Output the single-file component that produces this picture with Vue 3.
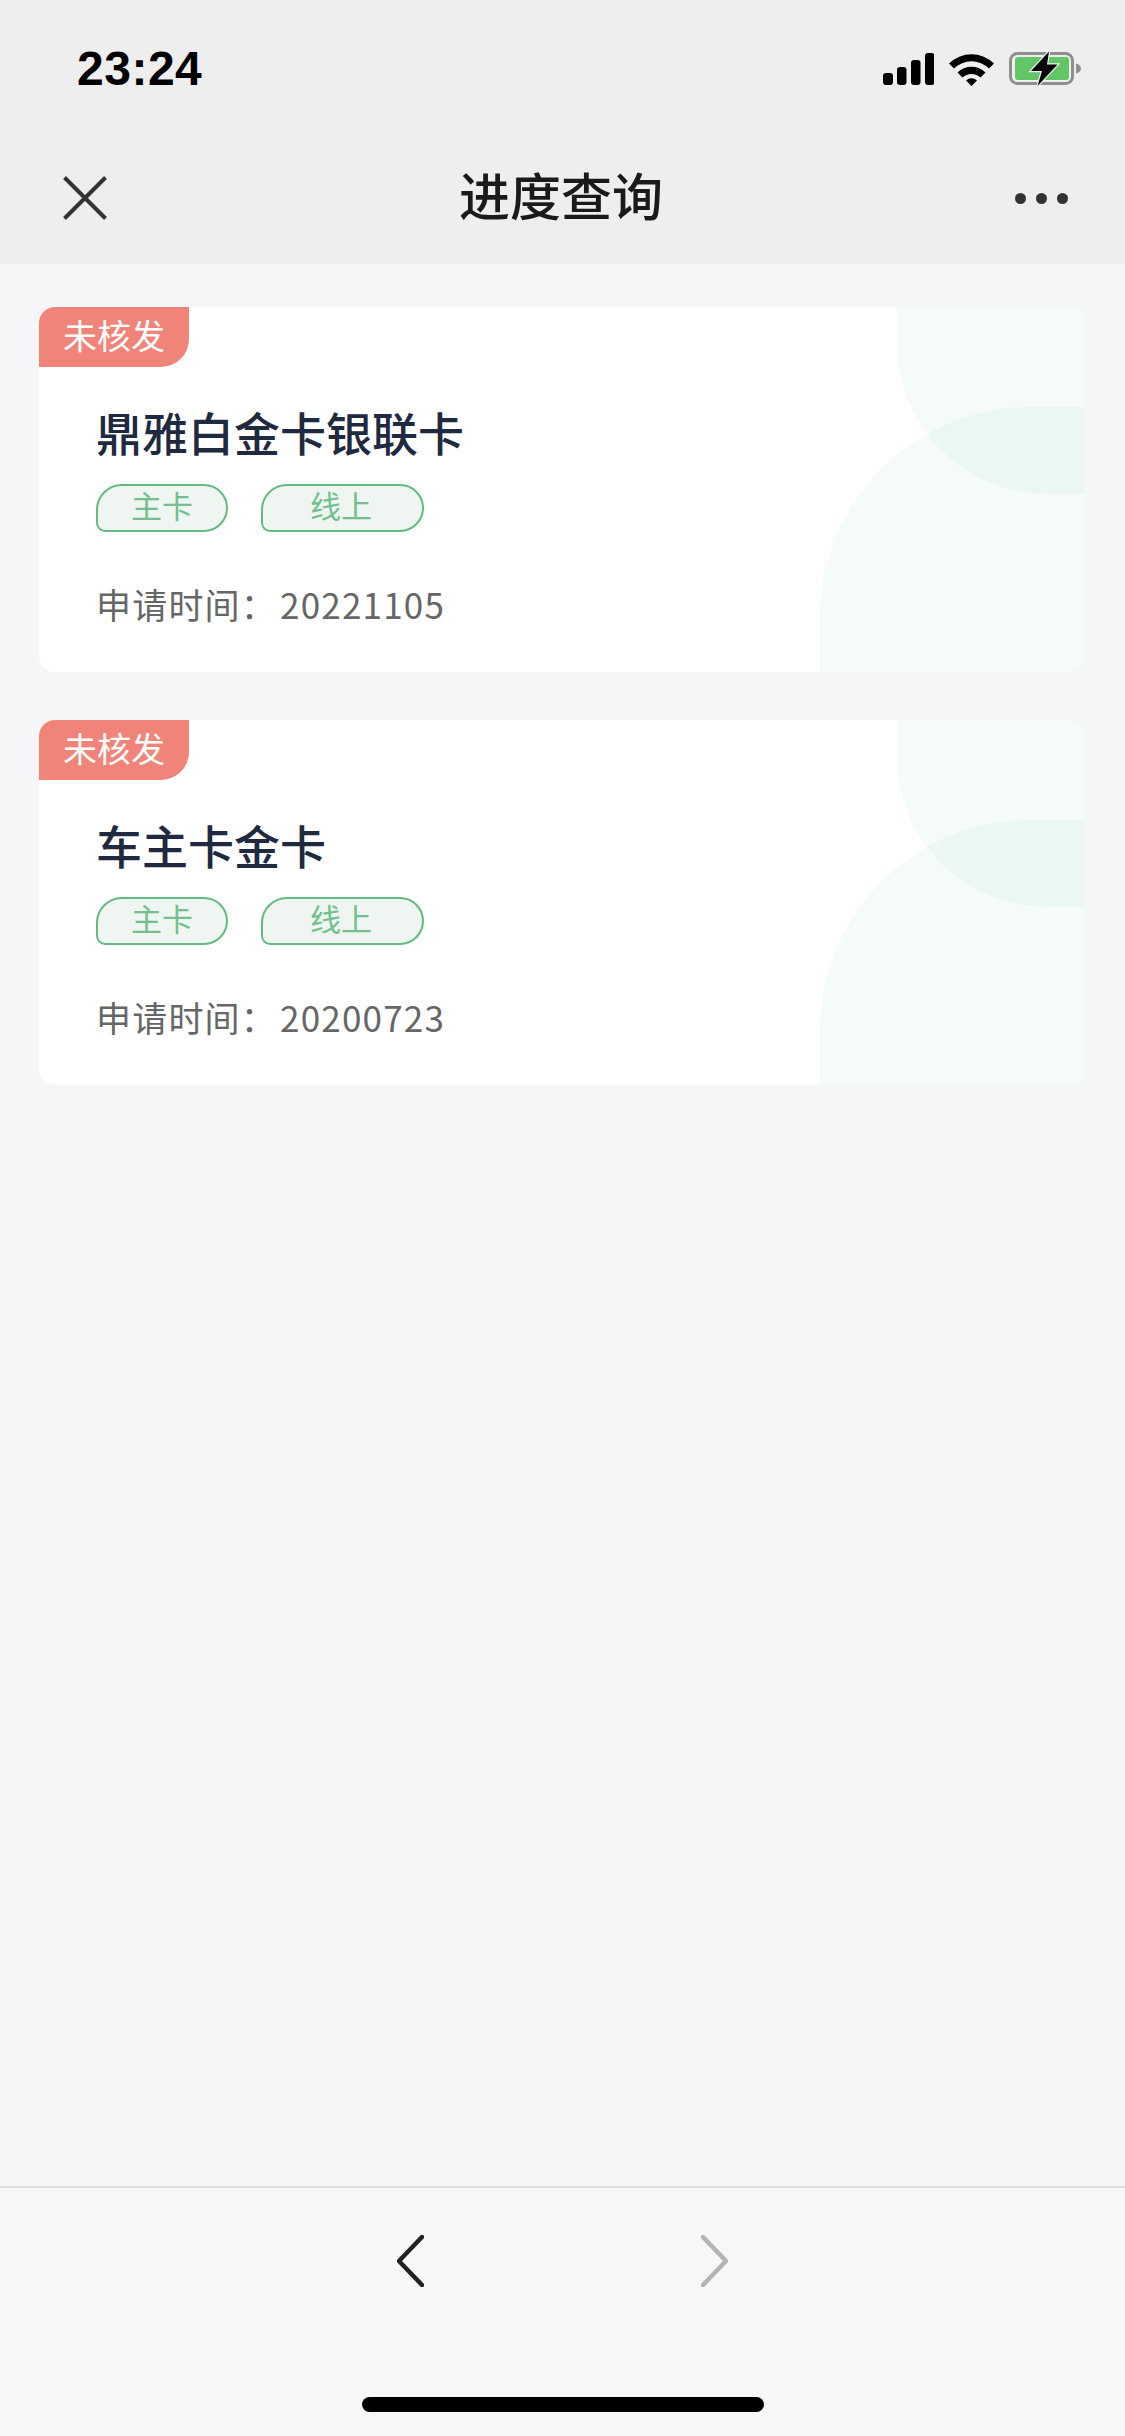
<script setup>
const cards = [
  { id: 1, name: '鼎雅白金卡银联卡', date: '20221105' },
  { id: 2, name: '车主卡金卡', date: '20200723' }
]
</script>

<template>
  <div class="page">
    <header class="head">
      <div class="status">
        <span class="time">23:24</span>
        <div class="status-icons">
          <svg class="signal" width="51" height="32" viewBox="0 0 51 32">
            <rect x="0" y="20" width="10" height="12" rx="3" />
            <rect x="14" y="14" width="9.500" height="18" rx="3" />
            <rect x="28" y="7" width="9.500" height="25" rx="3" />
            <rect x="42" y="0" width="9.500" height="32" rx="3" />
          </svg>
          <svg class="wifi" width="45" height="33" viewBox="0 0 45 33">
            <path d="M0 10.500A32 32 0 0 1 45 10.500L40 15.500A25 25 0 0 0 5 15.500Z" />
            <path d="M8.500 19.500A20 20 0 0 1 36.500 19.500L31.500 24.500A13 13 0 0 0 13.500 24.500Z" />
            <path d="M17 27.500A8 8 0 0 1 28 27.500L22.500 33Z" />
          </svg>
          <svg class="battery" width="74" height="36" viewBox="0 0 74 36">
            <rect x="1.500" y="2.500" width="62" height="30" rx="7" fill="none" stroke="#8e8e8e" stroke-width="3" />
            <rect x="6" y="6" width="54" height="23" rx="3" fill="#62c667" />
            <path d="M67 12.500C70 13 72 15 72 17.500C72 20 70 22 67 22.500Z" fill="#8e8e8e" />
            <path d="M40 0.500L22 20H33L28.500 35L48.500 13.500H38Z" fill="#000" stroke="#eee" stroke-width="2.500" paint-order="stroke" />
          </svg>
        </div>
      </div>
      <div class="nav">
        <svg class="close" width="44" height="44" viewBox="0 0 44 44">
          <path d="M1.500 1.500L42.500 42.500M42.500 1.500L1.500 42.500" />
        </svg>
        <h1 class="title">进度查询</h1>
        <div class="more"><i></i><i></i><i></i></div>
      </div>
    </header>

    <main class="list">
      <section v-for="card in cards" :key="card.id" class="card">
        <div class="shape shape-top"></div>
        <div class="shape shape-bottom"></div>
        <div class="badge">未核发</div>
        <div class="body">
          <div class="name">{{ card.name }}</div>
          <div class="tags">
            <span class="tag">主卡</span>
            <span class="tag tag-wide">线上</span>
          </div>
          <div class="date">申请时间：<span class="date-value">{{ card.date }}</span></div>
        </div>
      </section>
    </main>

    <footer class="foot">
      <div class="arrows">
        <svg width="27" height="52" viewBox="0 0 27 52">
          <path d="M25 2L2 26L25 50" stroke="#222" />
        </svg>
        <svg width="27" height="52" viewBox="0 0 27 52">
          <path d="M2 2L25 26L2 50" stroke="#b4b4b4" />
        </svg>
      </div>
      <div class="home-bar"></div>
    </footer>
  </div>
</template>

<style>
html,
body {
  margin: 0;
  background: #f5f6f8;
}
</style>

<style scoped>
.page {
  width: 1125px;
  height: 2436px;
  display: flex;
  flex-direction: column;
  background: #f5f6f8;
  font-family: "Noto Sans CJK SC", "Liberation Sans", sans-serif;
  overflow: hidden;
}
.head {
  height: 264px;
  background: #eeeeee;
}
.status {
  height: 132px;
  display: flex;
  justify-content: space-between;
  align-items: center;
  padding: 4px 42px 0 77px;
  box-sizing: border-box;
}
.time {
  font-family: "Liberation Sans", sans-serif;
  font-size: 48px;
  font-weight: 700;
  letter-spacing: 0.500px;
  color: #000;
}
.status-icons {
  display: flex;
  align-items: center;
  gap: 15px;
  padding-top: 2px;
}
.signal,
.wifi {
  fill: #000;
}
.nav {
  height: 132px;
  display: flex;
  justify-content: space-between;
  align-items: center;
  padding: 0 57px 0 63px;
}
.close path {
  fill: none;
  stroke: #333;
  stroke-width: 4;
}
.title {
  margin: 0 0 8px;
  font-size: 51px;
  font-weight: 500;
  line-height: 60px;
  color: #1a1a1a;
}
.more {
  display: flex;
  gap: 10px;
}
.more i {
  width: 11px;
  height: 11px;
  border-radius: 50%;
  background: #333;
}
.list {
  flex: 1;
  display: flex;
  flex-direction: column;
  gap: 48px;
  padding: 43px 40px 0 39px;
}
.card {
  position: relative;
  height: 365px;
  background: #fff;
  border-radius: 16px;
  overflow: hidden;
}
.shape {
  position: absolute;
  right: 0;
  background: rgba(60, 170, 130, 0.05);
}
.shape-top {
  top: 0;
  width: 188px;
  height: 187px;
  border-bottom-left-radius: 150px;
}
.shape-bottom {
  bottom: 0;
  width: 265px;
  height: 265px;
  border-top-left-radius: 210px;
}
.badge {
  width: 150px;
  height: 60px;
  background: #f08478;
  border-bottom-right-radius: 28px;
  color: #fff;
  font-size: 34px;
  line-height: 56px;
  text-align: center;
}
.body {
  position: relative;
  padding: 34px 0 0 57px;
}
.name {
  font-size: 46px;
  font-weight: 500;
  line-height: 60px;
  color: #1f2940;
}
.tags {
  display: flex;
  gap: 33px;
  margin-top: 23px;
}
.tag {
  height: 48px;
  box-sizing: border-box;
  padding: 0 33px;
  border: 2px solid #62b981;
  border-radius: 28px 26px 26px 10px;
  background: #eff6f2;
  color: #71c08d;
  font-size: 31px;
  line-height: 38px;
}
.tag-wide {
  padding: 0 50px 0 47px;
}
.date {
  margin-top: 47px;
  font-size: 35px;
  line-height: 50px;
  letter-spacing: 1.200px;
  color: #666;
}
.date-value {
  margin-left: 3px;
}
.foot {
  height: 250px;
  box-sizing: border-box;
  border-top: 2px solid #dedede;
  background: #f7f7f7;
  display: flex;
  flex-direction: column;
  align-items: center;
}
.arrows {
  display: flex;
  gap: 277px;
  margin-top: 47px;
}
.arrows path {
  fill: none;
  stroke-width: 4.500;
  stroke-linecap: round;
  stroke-linejoin: round;
}
.home-bar {
  width: 402px;
  height: 15px;
  margin-top: 110px;
  border-radius: 8px;
  background: #000;
}
</style>
